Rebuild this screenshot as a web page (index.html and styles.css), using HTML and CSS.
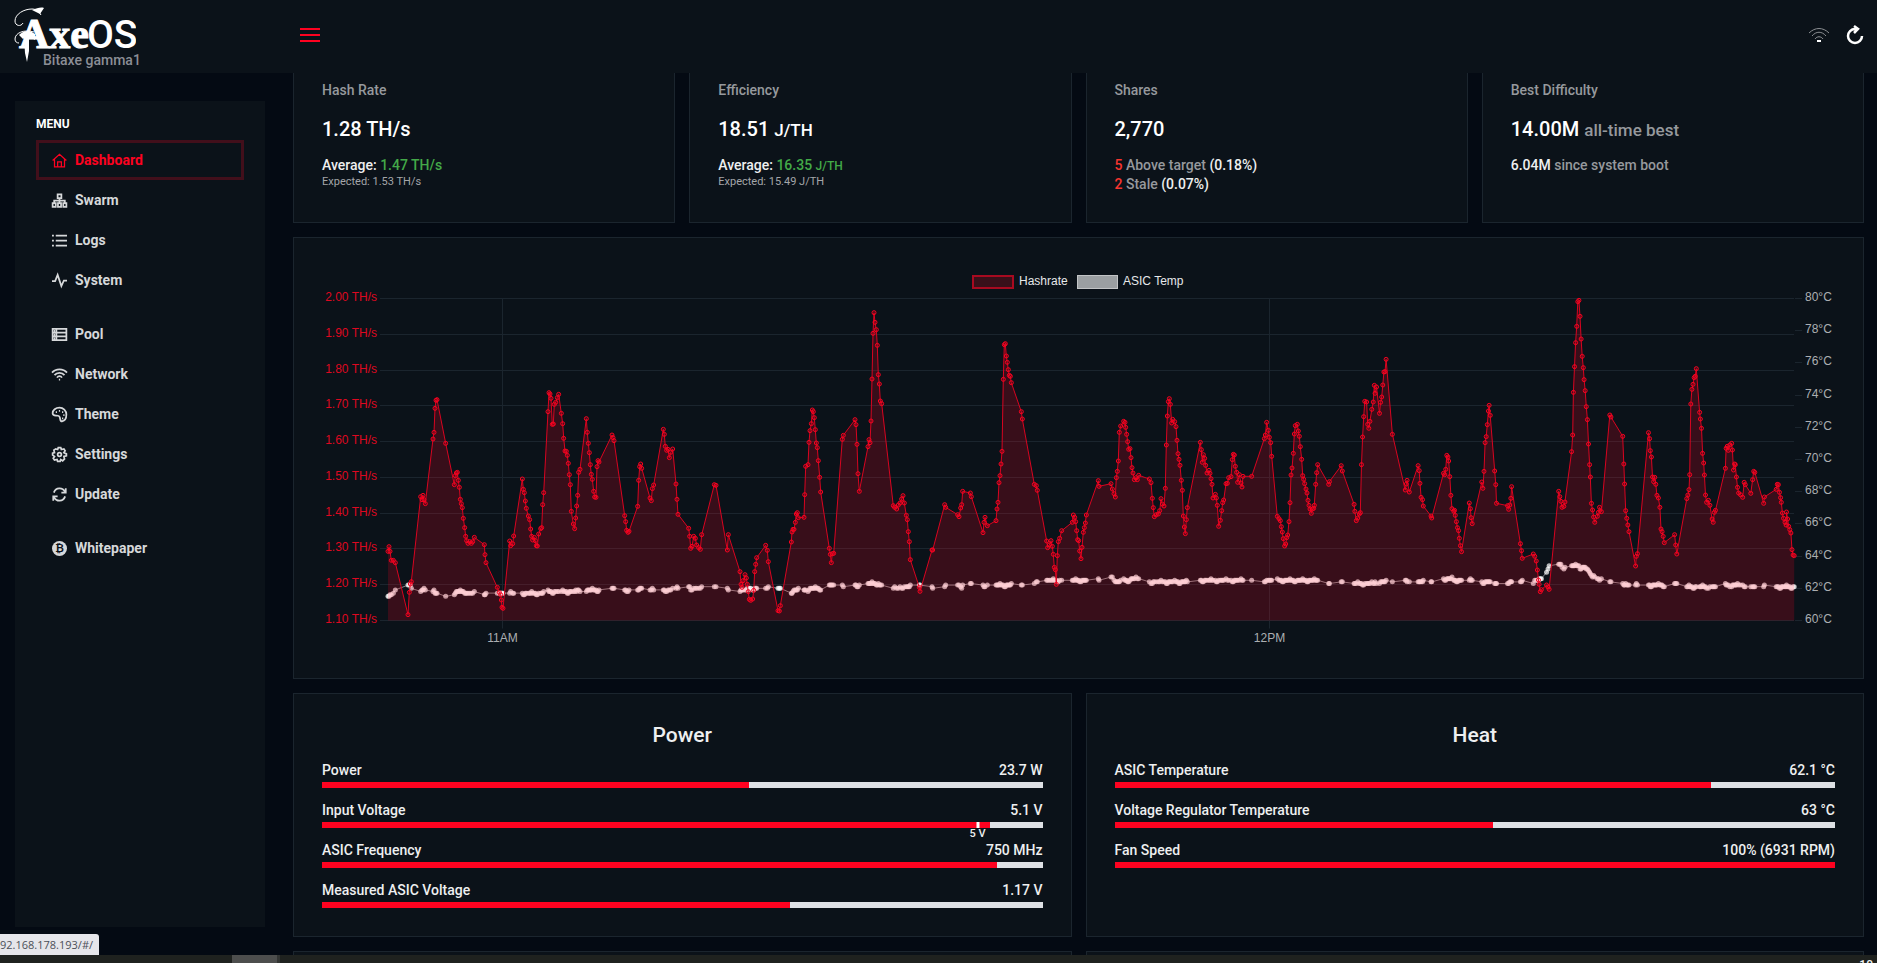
FILE: index.html
```html
<!DOCTYPE html>
<html lang="en">
<head>
    <meta charset="UTF-8">
    <meta name="viewport" content="width=device-width, initial-scale=1.0">
    <title>AxeOS</title>
    <link rel="stylesheet" href="styles.css">
</head>
<body>
    <header class="topbar">
        <div class="brand">
            <svg class="logo" width="122" height="58" viewBox="0 0 122 58" role="img" aria-label="AxeOS">
                <path class="swash" d="M27 10C24 5 21 4 18 4 10 4 1 9 1 16c0 5 6 6 8 2M20 27C10 24 1 28 1 34c0 3 2 4 4 4"/>
                <path class="swash-fill" d="M18 5c5-2 9-3 12-2l-4 6zM5 30c5-5 11-5 16-1v6c-5-3-9-3-12-1zM10 33h5v13l-2 11-2-9z"/>
                <text class="logo-axe" x="5" y="43">Axe</text>
                <text class="logo-os" x="73" y="43">OS</text>
            </svg>
            <span class="device-name">Bitaxe gamma1</span>
        </div>
        <button class="icon-button menu-toggle" aria-label="Toggle menu">
            <svg width="22" height="16" viewBox="0 0 22 16"><path d="M1 2h20M1 8h20M1 14h20"/></svg>
        </button>
        <div class="topbar-actions">
            <svg class="signal" width="20" height="14" viewBox="0 0 20 14" role="img" aria-label="Wifi signal">
                <path d="M0 5C6-1 14-1 20 5M3 8c4-5 10-5 14 0M6 11c2-3 6-3 8 0"/>
                <path class="signal-dot" d="M8 13h4"/>
            </svg>
            <button class="icon-button" aria-label="Restart">
                <svg width="18" height="20" viewBox="0 0 18 20"><path class="reload" d="M16 11a7 7 0 1 1-7-7h3M8 1l4 3-4 4"/></svg>
            </button>
        </div>
    </header>

    <div class="page">
        <nav class="sidebar">
            <h2>MENU</h2>
            <ul>
                <li><a class="active" href="#/"><svg viewBox="0 0 24 24"><path d="M1 12 12 2l11 10M4 10v12h16V10M9 22v-8h6v8"/></svg>Dashboard</a></li>
                <li><a href="#/swarm"><svg viewBox="0 0 24 24"><path d="M9 2h6v6H9zM1 16h5v6H1zM9.500 16h5v6h-5zM18 16h5v6h-5zM12 8v8M3.500 16v-4h17v4"/></svg>Swarm</a></li>
                <li><a href="#/logs"><svg viewBox="0 0 24 24"><path d="M0 4h3M0 12h3M0 20h3M6 4h18M6 12h18M6 20h18"/></svg>Logs</a></li>
                <li><a href="#/system"><svg viewBox="0 0 24 24"><path d="M0 13h5L9 3l6 18 4-9h5"/></svg>System</a></li>
            </ul>
            <ul>
                <li><a href="#/pool"><svg viewBox="0 0 24 24"><path d="M1 3h22v18H1zM1 9h22M1 15h22M7 3v18M3 6h2M3 12h2M3 18h2"/></svg>Pool</a></li>
                <li><a href="#/network"><svg viewBox="0 0 24 24"><path d="M0 9c6-7 18-7 24 0M4 13c4-5 12-5 16 0M8 17c2-3 6-3 8 0M11 20h2"/></svg>Network</a></li>
                <li><a href="#/theme"><svg viewBox="0 0 24 24"><path d="M12 1c6 0 11 5 11 11 0 5-2 10-7 11-5 0-1-8-6-9-4-1-9 1-9-4 0-5 5-9 11-9zM6 8h2M11 6h2M16 8h2M18 13h2M16 18h2"/></svg>Theme</a></li>
                <li><a href="#/settings"><svg viewBox="0 0 24 24"><path d="m10 1h4l1 3 4-1 2 3-2 3 4 2v3l-4 1 1 4-3 3-3-2-1 3h-4l-1-3-4 1-2-3 2-3-3-2v-3l3-1-1-4 3-2 3 1z"/><circle cx="12" cy="12" r="3"/></svg>Settings</a></li>
                <li><a href="#/update"><svg viewBox="0 0 24 24"><path d="M22 2v7h-7M21 8C17 0 6 0 3 9M2 22v-7h7M3 16c4 8 15 8 18-1"/></svg>Update</a></li>
            </ul>
            <ul>
                <li><a href="#/whitepaper"><svg viewBox="0 0 24 24"><circle class="coin" cx="12" cy="12" r="12"/><text class="coin-sign" x="12" y="18">₿</text></svg>Whitepaper</a></li>
            </ul>
        </nav>

        <main class="content">
            <section class="stats">
                <article class="card stat">
                    <h3>Hash Rate</h3>
                    <p class="value">1.28 TH/s</p>
                    <p>Average: <span class="good">1.47 TH/s</span></p>
                    <p class="expected">Expected: 1.53 TH/s</p>
                </article>
                <article class="card stat">
                    <h3>Efficiency</h3>
                    <p class="value">18.51 <span class="unit">J/TH</span></p>
                    <p>Average: <span class="good">16.35 <small>J/TH</small></span></p>
                    <p class="expected">Expected: 15.49 J/TH</p>
                </article>
                <article class="card stat">
                    <h3>Shares</h3>
                    <p class="value">2,770</p>
                    <p><span class="bad">5</span> <span class="muted">Above target</span> (0.18%)</p>
                    <p><span class="bad">2</span> <span class="muted">Stale</span> (0.07%)</p>
                </article>
                <article class="card stat">
                    <h3>Best Difficulty</h3>
                    <p class="value">14.00M <span class="unit muted">all-time best</span></p>
                    <p>6.04M <span class="muted">since system boot</span></p>
                </article>
            </section>

            <section class="card">
                <svg id="chart" class="chart" viewBox="0 0 1513 384" role="img" aria-label="Hashrate and ASIC temperature"></svg>
            </section>

            <section class="gauges">
                <article class="card">
                    <h2>Power</h2>
                    <div class="gauge">
                        <div class="gauge-label"><span>Power</span><span>23.7 W</span></div>
                        <div class="track"><div class="fill" style="width: 59.2%"></div></div>
                    </div>
                    <div class="gauge">
                        <div class="gauge-label"><span>Input Voltage</span><span>5.1 V</span></div>
                        <div class="track">
                            <div class="fill" style="width: 92.7%"></div>
                            <div class="mark" style="left: 91%"><span>5 V</span></div>
                        </div>
                    </div>
                    <div class="gauge">
                        <div class="gauge-label"><span>ASIC Frequency</span><span>750 MHz</span></div>
                        <div class="track"><div class="fill" style="width: 93.7%"></div></div>
                    </div>
                    <div class="gauge">
                        <div class="gauge-label"><span>Measured ASIC Voltage</span><span>1.17 V</span></div>
                        <div class="track"><div class="fill" style="width: 65%"></div></div>
                    </div>
                </article>
                <article class="card">
                    <h2>Heat</h2>
                    <div class="gauge">
                        <div class="gauge-label"><span>ASIC Temperature</span><span>62.1 °C</span></div>
                        <div class="track"><div class="fill" style="width: 82.8%"></div></div>
                    </div>
                    <div class="gauge">
                        <div class="gauge-label"><span>Voltage Regulator Temperature</span><span>63 °C</span></div>
                        <div class="track"><div class="fill" style="width: 52.5%"></div></div>
                    </div>
                    <div class="gauge">
                        <div class="gauge-label"><span>Fan Speed</span><span>100% (6931 RPM)</span></div>
                        <div class="track"><div class="fill" style="width: 100%"></div></div>
                    </div>
                </article>
                <article class="card"></article>
                <article class="card"></article>
            </section>
        </main>
        <div class="link-status">92.168.178.193/#/</div>
    </div>

    <footer class="taskbar"><span class="task"></span><span class="clock">10</span></footer>

    <script src="chart.js"></script>
</body>
</html>
```
FILE: styles.css
```css
* {
    box-sizing: border-box;
}
body {
    background: #040a13;
    color: #eeeff0;
    display: flex;
    flex-direction: column;
    font-family: Roboto, sans-serif;
    font-size: 14px;
    font-weight: 500;
    height: 100vh;
    line-height: 20px;
    margin: 0;
    overflow: hidden;
}
h2, h3, p, ul {
    margin: 0;
    padding: 0;
}

/* Top bar */
.topbar {
    align-items: center;
    background: #0b1219;
    display: flex;
    flex: none;
    height: 73px;
    padding: 0 13px 0 14px;
}
.brand {
    display: flex;
    flex-direction: column;
    height: 100%;
    padding-top: 5px;
    width: 279px;
}
.logo {
    flex: none;
    margin-bottom: -13px;
}
.logo text {
    fill: #fff;
}
.logo-axe {
    font-family: "Liberation Serif", serif;
    font-size: 42px;
    font-weight: 700;
    stroke: #fff;
}
.logo-os {
    font-size: 39px;
}
.swash {
    fill: none;
    stroke: #fff;
}
.swash-fill {
    fill: #fff;
}
.device-name {
    color: #8b8e96;
    margin-left: 29px;
}
.icon-button {
    background: none;
    border: 0;
    display: flex;
    padding: 0;
}
.menu-toggle {
    margin: -3px 0 0 6px;
}
.menu-toggle path {
    stroke: #fe0220;
    stroke-width: 2;
}
.topbar-actions {
    align-items: center;
    display: flex;
    gap: 17px;
    margin: -4px 0 0 auto;
}
.signal path {
    fill: none;
    stroke: #8b8e92;
    stroke-width: 1;
}
.signal .signal-dot {
    stroke: #fff;
    stroke-width: 2;
}
.reload {
    fill: none;
    stroke: #fff;
    stroke-width: 2.5;
}

/* Layout */
.page {
    display: flex;
    flex: 1;
    gap: 28px;
    min-height: 0;
    overflow: hidden;
    padding: 0 13px 0 15px;
    position: relative;
}
.sidebar {
    background: #0b1219;
    flex: none;
    margin: 28px 0;
    padding: 13px 21px;
    width: 250px;
}
.sidebar h2 {
    color: #fff;
    font-size: 12px;
    font-weight: 700;
    margin-bottom: 6px;
}
.sidebar ul {
    list-style: none;
    margin-bottom: 14px;
}
.sidebar a {
    align-items: center;
    border: 3px solid transparent;
    color: #d6d8da;
    display: flex;
    font-weight: 700;
    gap: 8px;
    height: 40px;
    padding: 0 13px;
    text-decoration: none;
}
.sidebar a.active {
    border-color: #420f1b;
    color: #fe0220;
}
.sidebar svg {
    fill: none;
    height: 15px;
    overflow: visible;
    stroke: currentColor;
    stroke-width: 2.8;
    width: 15px;
}
.sidebar .active svg {
    stroke-width: 2;
}
.sidebar .coin {
    fill: currentColor;
    stroke: none;
}
.sidebar .coin-sign {
    fill: #0b1219;
    font-family: "DejaVu Sans", sans-serif;
    font-size: 17px;
    stroke: none;
    text-anchor: middle;
}
.content {
    display: flex;
    flex: 1;
    flex-direction: column;
    gap: 14px;
    min-width: 0;
}
.card {
    background: #0b1219;
    border: 1px solid #1b252e;
    flex: none;
    padding: 28px;
}

/* Stats */
.stats {
    display: grid;
    flex: none;
    gap: 14px;
    grid-template-columns: repeat(4, 1fr);
}
.stat {
    border-top: 0;
    line-height: 19px;
    padding-top: 7px;
}
.stat h3 {
    color: #96999d;
    font-size: 14px;
    font-weight: 500;
    line-height: 20px;
}
.stat .value {
    color: #fff;
    font-size: 20px;
    line-height: 28px;
    margin: 15px 0 13px;
}
.stat .unit {
    font-size: 17px;
    line-height: 20px;
}
.stat small {
    font-size: 12px;
    line-height: 12px;
}
.stat .expected {
    color: #a4a6a9;
    font-size: 11px;
    font-weight: 400;
    line-height: 13px;
}
.stat .muted {
    color: #96999d;
}
.good {
    color: #43a948;
}
.bad {
    color: #f6352f;
}

/* Chart */
.chart {
    display: block;
    font-family: "Liberation Sans", Arial, sans-serif;
    font-size: 12px;
    font-weight: 400;
    width: 100%;
}
.chart .grid {
    stroke: #1b252e;
}
.chart .axis-rate {
    fill: #de0820;
    text-anchor: end;
}
.chart .axis-temp {
    fill: #acafb2;
}
.chart .axis-time {
    fill: #acafb2;
    text-anchor: middle;
}
.chart .legend {
    fill: #e6e8ea;
}
.chart .swatch-rate {
    fill: #39101a;
    stroke: #a80a20;
    stroke-width: 2;
}
.chart .swatch-temp {
    fill: #9b9fa2;
    stroke: #c2c4c6;
}
.chart .temp-line {
    fill: none;
    stroke: #fff;
    stroke-opacity: 0.5;
}
.chart .temp-dot {
    fill: #fff;
    fill-opacity: 0.7;
}
.chart .rate-area {
    fill: #fe0220;
    fill-opacity: 0.19;
}
.chart .rate-line {
    fill: none;
    stroke: #d80420;
    stroke-linejoin: round;
}
.chart .rate-dot {
    fill: #fe0220;
    fill-opacity: 0.15;
    stroke: #f50320;
}

/* Gauges */
.gauges {
    display: grid;
    flex: none;
    gap: 14px;
    grid-template-columns: repeat(2, 1fr);
}
.gauges h2 {
    font-size: 21px;
    font-weight: 500;
    line-height: 26px;
    margin-bottom: 12px;
    text-align: center;
}
.gauge + .gauge {
    margin-top: 12px;
}
.gauge-label {
    display: flex;
    justify-content: space-between;
    margin-bottom: 2px;
}
.track {
    background: #dee1e5;
    height: 6px;
    position: relative;
}
.fill {
    background: #fe0220;
    height: 100%;
}
.mark {
    background: #fff;
    height: 100%;
    position: absolute;
    top: 0;
    transform: translateX(-50%);
    width: 3px;
}
.mark span {
    font-size: 11px;
    left: 50%;
    line-height: 12px;
    position: absolute;
    top: 6px;
    transform: translateX(-50%);
    white-space: nowrap;
}

/* Browser link hint and desktop bar */
.link-status {
    background: #e6e6ea;
    border-top-right-radius: 3px;
    bottom: 0;
    color: #4c5058;
    font-family: "Open Sans", sans-serif;
    font-size: 11px;
    font-weight: 400;
    height: 21px;
    left: 0;
    line-height: 21px;
    padding-right: 6px;
    position: absolute;
}
.taskbar {
    background: #1f221f;
    display: flex;
    flex: none;
    height: 8px;
    justify-content: space-between;
    overflow: hidden;
    padding: 0 4px 0 232px;
}
.task {
    background: #4d4e4d;
    border-right: 3px solid #333533;
    width: 48px;
}
.clock {
    font-size: 12px;
    line-height: 16px;
    padding-top: 2px;
}
```
FILE: chart.js
```js
// plot area inside the svg
const plot = { left: 66, right: 1472, top: 32.5, bottom: 354.5 };

const blocks = [
    {
        x: -22, unit: 3,
        rate: `264,877 267,863 270,877 274,904 280,904 286,911 324,1067 328,1000 331,975 334,968 362,713 366,722 369,709 372,722 376,734
            399,540 402,520 405,448 408,424 411,422 437,553 463,677 466,650 469,642 472,640 475,664 478,685 481,721 484,734 487,746
            490,778 494,806 497,832 500,845 504,853 509,848 514,853 518,848 523,835 553,857 555,887 558,911 592,985 598,1000 602,1007
            604,1023 606,1045 609,1048 629,846 632,860 638,854 641,831 667,660 670,691 673,701 676,726 679,748 685,771 689,782 692,810
            695,832 698,843 703,835 706,845 709,860 712,861 716,825 722,809 725,806 728,737 731,701 744,458 747,401 750,405 753,418
            757,496 760,495 763,436 767,430 772,416 776,406 784,463 788,494 791,538 795,576 799,577 802,589 805,613 808,647 811,677
            814,757 820,795 824,809 827,777 830,741 833,709 836,640 840,631 859,479 862,520 865,553 868,581 871,617 874,646 877,661
            881,697 884,714 888,715 891,623 894,605 897,609 936,528 939,536 942,545 974,770 977,788 980,814 984,820 987,817 1013,742
            1016,664 1019,623 1022,615 1025,628 1050,717 1054,725 1057,689 1061,678 1090,511 1093,526 1096,562 1100,574 1104,571
            1108,596 1112,580 1118,570 1128,675 1131,721 1134,766 1166,808 1169,832 1172,868 1176,862 1181,832 1186,838 1190,858
            1196,866 1201,871 1205,827 1243,677 1248,679 1282,873 1285,827 1320,938 1323,976 1326,985 1329,965 1335,947 1339,957
            1342,976 1345,998 1348,1021 1352,1024 1358,1020 1361,994 1364,938 1367,916 1370,896 1397,859 1402,874 1405,908 1434,1055
            1438,1056 1441,1040 1474,849 1476,819 1479,811 1482,811 1486,790 1489,765 1492,761 1495,776`,
        temp: `264,1012 285,1000 324,979 334,981 362,994 372,990 405,1000 437,1007 465,1003 470,997 500,1000 555,1005 590,995 608,1003
            635,1004 700,1003 730,1000 760,998 860,994 890,993 936,989 980,996 1020,988 1055,994 1100,992 1130,989 1165,985 1200,989
            1243,984 1283,986 1320,994 1350,990 1400,988 1437,988 1475,996`
    },
    {
        x: 478, unit: 3,
        rate: `12,775 14,707 17,622 24,617 27,550 30,515 34,494 37,453 40,458 43,476 46,512 49,552 52,566 55,605 59,655 62,699 88,868
            91,886 94,911 97,884 101,883 127,541 130,529 165,482 168,497 171,556 174,644 178,697 204,563 207,542 210,551 213,486
            216,360 219,223 222,161 225,190 229,212 232,259 235,347 238,375 241,426 245,434 280,740 284,745 290,750 295,738 300,732
            305,720 309,710 313,732 319,769 322,782 325,818 328,848 331,902 358,985 360,997 396,873 398,873 434,737 437,745 473,767
            477,773 482,747 485,737 488,697 511,702 514,713 549,821 552,790 555,775 562,800 588,785 591,750 594,730 597,671 600,650
            603,615 606,577 610,361 613,257 616,254 619,291 622,310 625,332 628,349 631,352 634,371 664,458 667,480 703,676 709,680
            712,694 740,846 743,866 748,858 753,845 757,862 760,886 763,925 766,932 769,976 772,890 775,848 779,838 785,815 817,790
            820,768 824,775 827,788 830,815 833,842 836,845 839,876 843,899 846,865 850,820 853,806 856,792 859,768 895,665 897,682
            933,674 937,690 942,704 946,714 949,656 952,637 955,606 958,520 962,501 971,487 975,490 977,505 980,526 983,548 986,571
            990,569 993,596 996,626 999,642 1003,662 1008,656 1012,662 1016,649 1048,660 1053,671 1057,718 1060,746 1063,773 1069,767
            1075,765 1079,755 1083,719 1087,735 1092,741 1096,688 1099,558 1102,471 1105,428 1108,419 1111,436 1115,492 1118,481
            1124,488 1128,503 1131,544 1134,584 1137,601 1140,619 1144,664 1147,694 1150,771 1153,804 1156,824 1159,782 1162,746
            1201,550 1204,572 1207,610 1210,587 1214,598 1217,619 1221,642 1227,634 1230,643 1233,659 1236,676 1239,717 1246,706
            1249,717 1252,739 1256,802 1261,784 1265,755 1268,731 1271,723 1278,674 1282,673 1286,656 1293,653 1297,602 1300,586
            1303,588 1306,622 1310,640 1313,670 1318,647 1323,672 1326,684 1329,652 1355,652 1393,539 1396,528 1400,490 1405,514
            1408,535 1412,551 1415,592 1432,772 1437,779 1441,785 1444,803 1447,819 1450,839 1454,861 1457,855 1460,836 1463,828
            1467,788 1470,731 1473,648 1476,627 1480,583 1483,525 1486,500 1492,496 1495,516 1498,532 1501,563 1505,601 1508,650
            1511,661 1514,674 1518,690 1521,702 1524,724 1527,739 1530,750 1534,763 1537,750 1541,748 1543,739 1547,676 1550,641
            1553,617`,
        temp: `0,992 60,988 98,978 128,985 168,977 210,974 240,976 280,987 330,983 358,977 398,985 436,976 475,978 485,986 512,973
            550,976 590,980 660,976 700,976 707,966 780,966 895,964 935,954 950,968 980,962 1015,960 1050,967 1160,967 1200,964
            1350,964 1553,963`
    },
    {
        x: 978, unit: 2.7175,
        rate: `78,676 80,668 112,620 115,636 147,736 149,757 153,785 157,777 161,765 164,761 167,617 170,534 173,473 176,427 181,429
            184,496 187,508 190,487 195,451 199,429 202,379 204,403 208,384 216,463 219,430 222,414 225,378 228,339 231,338 234,301
            251,526 286,693 289,675 291,664 297,699 321,620 324,635 326,673 329,715 333,722 335,741 356,771 358,777 390,643 393,647
            396,631 399,589 402,594 404,606 407,653 410,709 413,749 418,757 420,754 422,769 425,788 428,806 431,815 433,838 436,860
            439,878 460,732 463,749 465,776 468,794 494,669 497,688 500,637 503,551 506,533 509,497 512,456 514,439 517,469 529,636
            532,677 534,733 564,740 567,751 570,738 573,718 575,683 599,854 602,875 604,898 634,885 638,892 642,906 645,933 648,963
            650,976 653,998 656,992 670,978 674,984 677,991 703,697 706,713 709,727 712,745 717,742 720,729 738,578 741,528 743,400
            746,323 749,251 752,202 755,128 758,124 761,172 764,240 767,292 770,326 772,362 775,395 778,443 781,482 784,555 787,617
            789,654 792,733 795,753 798,774 801,790 808,772 811,760 814,745 819,758 842,468 845,474 877,532 880,615 882,675 885,755
            888,778 891,798 894,818 912,921 914,892 917,884 947,521 950,539 952,575 955,594 958,654 961,668 964,655 967,676 970,709
            974,717 978,745 981,810 984,818 987,832 990,851 1018,827 1021,858 1024,885 1051,719 1054,708 1057,692 1059,647 1062,435
            1065,391 1068,376 1071,356 1074,352 1077,329 1086,460 1088,480 1091,508 1094,583 1097,612 1099,648 1102,708 1105,730
            1110,724 1114,739 1120,780 1123,790 1126,760 1129,754 1156,628 1158,568 1161,562 1164,574 1168,558 1173,553 1175,573
            1178,633 1181,615 1183,617 1186,654 1189,685 1192,702 1197,707 1203,715 1207,670 1210,677 1225,703 1230,662 1233,637
            1236,640 1260,733 1262,714 1294,691 1297,676 1300,677 1303,700 1306,716 1308,730 1311,762 1314,778 1318,790 1321,798
            1322,759 1325,780 1328,802 1331,812 1334,822 1337,872 1340,888 1343,890`,
        temp: `45,964 78,970 113,970 147,973 230,970 252,970 290,965 325,970 358,970 392,958 430,963 465,964 500,969 534,973 570,969
            602,970 634,971 640,962 655,958 670,938 677,926 705,913 718,924 750,921 775,925 790,945 815,964 845,970 880,972 893,980
            914,978 947,977 990,976 1018,972 1050,982 1130,982 1158,978 1200,977 1225,985 1233,982 1260,982 1343,982`
    }
];

function readSeries(name) {
    return blocks.flatMap((block) => block[name].trim().split(/\s+/).map((pair) => {
        const [x, y] = pair.split(',').map(Number);
        return [block.x + x / block.unit, y / 3 - 7];
    }));
}

const svg = document.getElementById('chart');

function add(tag, className, attrs, text) {
    const el = document.createElementNS('http://www.w3.org/2000/svg', tag);
    el.setAttribute('class', className);
    Object.entries(attrs).forEach(([key, value]) => el.setAttribute(key, value));
    if (text) el.textContent = text;
    svg.appendChild(el);
}

function line(x1, y1, x2, y2) {
    add('path', 'grid', { d: `M${x1} ${y1}L${x2} ${y2}` });
}

// Legend
add('rect', 'swatch-rate', { x: 651, y: 10, width: 40, height: 12 });
add('text', 'legend', { x: 697, y: 19 }, 'Hashrate');
add('rect', 'swatch-temp', { x: 755.5, y: 9.5, width: 40, height: 13 });
add('text', 'legend', { x: 801, y: 19 }, 'ASIC Temp');

// Left axis with grid lines
for (let i = 0; i < 10; i++) {
    const y = Math.floor(plot.top + i * (plot.bottom - plot.top) / 9) + 0.5;
    line(plot.left - 8, y, plot.right, y);
    add('text', 'axis-rate', { x: plot.left - 11, y: y + 2.5 }, (2 - i / 10).toFixed(2) + ' TH/s');
}

// Right axis
for (let i = 0; i <= 10; i++) {
    const y = Math.floor(plot.top + i * (plot.bottom - plot.top) / 10) + 0.5;
    line(plot.right + 1, y, plot.right + 8, y);
    add('text', 'axis-temp', { x: plot.right + 11, y: y + 2.5 }, (80 - i * 2) + '°C');
}

// Time axis
[[180.5, '11AM'], [947.5, '12PM']].forEach(([x, label]) => {
    line(x, plot.top, x, plot.bottom + 8);
    add('text', 'axis-time', { x: x, y: 376 }, label);
});

const rate = readSeries('rate');
const tempTrend = readSeries('temp');

// Temperature is reported in 0.1 degree steps at the same moments as the hashrate
const step = (plot.bottom - plot.top) / 200;
const temp = rate.map(([x], i) => {
    let k = tempTrend.findIndex((point) => point[0] >= x);
    if (k < 1) k = k === 0 ? 1 : tempTrend.length - 1;
    const [x1, y1] = tempTrend[k - 1];
    const [x2, y2] = tempTrend[k];
    const y = y1 + (y2 - y1) * (x - x1) / (x2 - x1);
    const noise = [0, 0, 1, 0, -1, 0, 0, 0, -1, 0, 0][(i * 7) % 11];
    return [x, plot.bottom - Math.round((plot.bottom - y) / step + noise) * step];
});

const toPath = (points) => 'M' + points.map((p) => p[0].toFixed(1) + ' ' + p[1].toFixed(1)).join('L');

add('path', 'temp-line', { d: toPath(temp) });
temp.forEach(([x, y]) => add('circle', 'temp-dot', { cx: x, cy: y, r: 2.5 }));

add('path', 'rate-area', { d: `${toPath(rate)}V${plot.bottom}H${plot.left}Z` });
add('path', 'rate-line', { d: toPath(rate) });
rate.forEach(([x, y]) => add('circle', 'rate-dot', { cx: x, cy: y, r: 2 }));
```
